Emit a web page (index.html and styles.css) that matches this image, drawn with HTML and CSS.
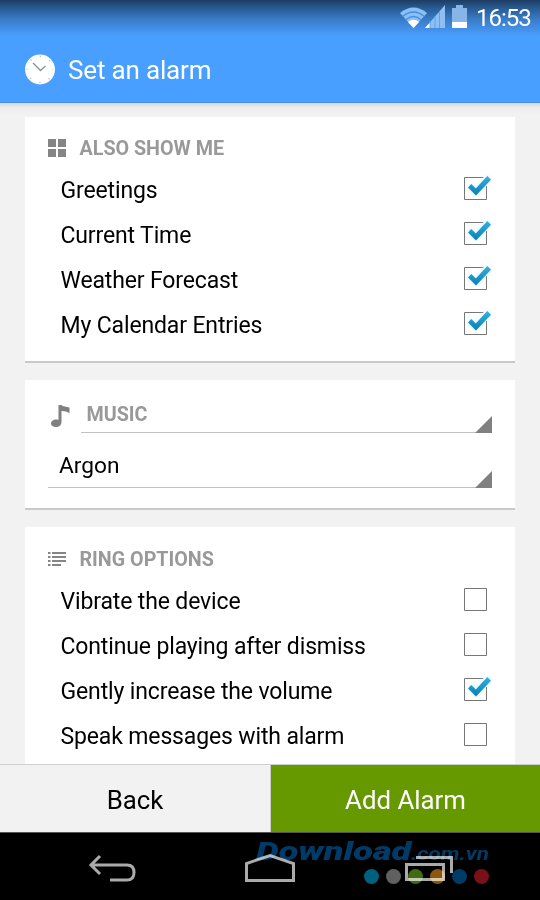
FILE: index.html
```html
<!DOCTYPE html>
<html lang="en">
<head>
<meta charset="utf-8">
<title>Set an alarm</title>
<link rel="stylesheet" href="styles.css">
</head>
<body>
<svg class="defs" width="0" height="0">
  <defs>
    <linearGradient id="tick" x1="0" y1="0" x2="0" y2="1"><stop offset="0" stop-color="#35b0de"/><stop offset="1" stop-color="#087fb5"/></linearGradient>
    <filter id="glow" x="-40%" y="-40%" width="180%" height="180%"><feGaussianBlur stdDeviation="2"/></filter>
    <symbol id="box" viewBox="0 0 32 32"><path d="M4.500 6.500h22v22h-22z" fill="#fff" stroke="#777"/></symbol>
    <symbol id="checked" viewBox="0 0 32 32">
      <path d="M4.500 6.500h22v22h-22z" fill="#fff" stroke="#777"/>
      <path d="M8 16l3-3 5 5L27 5l4 3-15 16z" fill="#a6e6fb" opacity=".75" filter="url(#glow)"/>
      <path d="M23 5h6v10h-4z" fill="#f2fbfe"/>
      <path d="M8 16.500l3.300-3.400 4.500 4.300L27.300 5l3.700 3.800L16 24.500z" fill="url(#tick)"/>
    </symbol>
  </defs>
</svg>
<div class="phone">
  <header class="top">
    <div class="status">
      <svg class="wifi" width="28" height="22" viewBox="0 0 28 22"><path d="M0 6Q13.500-5 27 6L13.500 21z" fill="#8dbff3"/><path d="M2.500 9.500Q13.500.5 24.500 9.500M5.500 13Q13.500 6 21.500 13" fill="none" stroke="#438fdf" stroke-width="1.300"/><path d="M8 15Q13.500 10.500 19 15L13.500 21z" fill="#fff"/></svg>
      <svg class="signal" width="20" height="23" viewBox="0 0 20 23"><path d="M0 23L20 0V23z" fill="#8dbff3"/><path d="M5 16v7M10 11v12M14.500 6v17" stroke="#58a2ee"/><path d="M0 23l4.500-5v5z" fill="#fff"/></svg>
      <svg class="battery" width="15" height="23" viewBox="0 0 15 23"><path d="M0 3h4V0h7v3h4v20H0z" fill="#87b5e6"/><path d="M0 17h15v6H0z" fill="#fff"/></svg>
      <span class="time">16:53</span>
    </div>
    <div class="title">
      <svg width="30" height="31" viewBox="0 0 30 31"><circle cx="15" cy="15.500" r="15" fill="#fff"/><circle cx="15" cy="15.500" r="13" fill="none" stroke="#b9bec3" stroke-width="1.500" stroke-dasharray="1.200 9.010" stroke-dashoffset=".6"/><path d="M8 9l7.500 7.500 5-4.500" fill="none" stroke="#8b9297" stroke-width="1.300"/></svg>
      <h1>Set an alarm</h1>
    </div>
  </header>
  <main class="content">
    <section class="card show">
      <h2><svg width="18" height="18" viewBox="0 0 18 18"><path d="M0 0h8v8H0zM10 0h8v8h-8zM0 10h8v8H0zM10 10h8v8h-8z" fill="#858585"/></svg><span>ALSO SHOW ME</span></h2>
      <div class="row"><span>Greetings</span><svg><use href="#checked"/></svg></div>
      <div class="row"><span>Current Time</span><svg><use href="#checked"/></svg></div>
      <div class="row"><span>Weather Forecast</span><svg><use href="#checked"/></svg></div>
      <div class="row"><span>My Calendar Entries</span><svg><use href="#checked"/></svg></div>
    </section>
    <section class="card music">
      <div class="music-head">
        <svg width="19" height="22" viewBox="0 0 19 22"><path d="M7.500 0h3l1 1 7 1.500v6q-2-2.500-8-2.500V17c0 3-2.500 5-5.500 5S0 20.500 0 18.500C0 15.500 4 13.500 7.500 15z" fill="#808080"/></svg>
        <div class="spinner"><span>MUSIC</span><i></i></div>
      </div>
      <div class="spinner value"><span>Argon</span><i></i></div>
    </section>
    <section class="card ring">
      <h2><svg width="18" height="14" viewBox="0 0 18 14"><path d="M0 1h2.500M0 5h2.500M0 9h2.500M0 13h2.500M4 1h14M4 5h14M4 9h14M4 13h9" stroke="#858585" stroke-width="1.800"/></svg><span>RING OPTIONS</span></h2>
      <div class="row"><span>Vibrate the device</span><svg><use href="#box"/></svg></div>
      <div class="row"><span>Continue playing after dismiss</span><svg><use href="#box"/></svg></div>
      <div class="row"><span>Gently increase the volume</span><svg><use href="#checked"/></svg></div>
      <div class="row"><span>Speak messages with alarm</span><svg><use href="#box"/></svg></div>
    </section>
  </main>
  <footer class="actions"><div class="back">Back</div><div class="add">Add Alarm</div></footer>
  <nav class="nav">
    <svg width="540" height="67" viewBox="0 0 540 67" fill="none" stroke="#aaa" stroke-width="3"><path d="M91 32h36q7 0 7 7.500t-7 7.500h-17M100 23l-9 9 9 9" /><path d="M246.500 47.500v-17L270 22.500l23.500 8v17z"/><path d="M406.500 31.500h37v15h-37zM416 24.500h35.500V40"/></svg>
    <div class="watermark">
      <div class="brand"><b>Download</b><em>.com.vn</em></div>
      <div class="dots"><i class="cyan"></i><i class="gray"></i><i class="green"></i><i class="orange"></i><i class="blue"></i><i class="red"></i></div>
    </div>
  </nav>
</div>
</body>
</html>
```
FILE: styles.css
```css
* { box-sizing: border-box; }
body { margin: 0; font-family: Roboto, "Liberation Sans", sans-serif; color: #000; }
.defs { position: absolute; }
.phone { width: 540px; height: 900px; display: flex; flex-direction: column; overflow: hidden; background: #f2f2f2; }
.top { height: 103px; flex: none; color: #fff; background: linear-gradient(#1d3c61 0, #285b92 8px, #3a7dca 20px, #489fff 36px); border-bottom: 1px solid #438fe2; }
.status { height: 36px; padding: 5px 8px 0 0; display: flex; justify-content: flex-end; align-items: flex-start; }
.wifi { margin-top: 2px; }
.signal { margin-left: -3px; }
.battery { margin-left: 7px; }
.time { margin-left: 9px; font-size: 24px; line-height: 27px; letter-spacing: -1px; width: 56px; white-space: nowrap; }
.title { height: 66px; padding-left: 25px; display: flex; align-items: center; gap: 13px; }
h1 { margin: 2px 0 0; font-size: 26px; line-height: 30px; font-weight: 400; letter-spacing: -.17px; }
.content { height: 661px; flex: none; overflow: hidden; padding: 14px 25px 0; display: flex; flex-direction: column; gap: 17px; background: linear-gradient(#d8d8d8 0, #ededed 5px, #f2f2f2 12px); }
.card { flex: none; background: #fff; border-bottom: 2px solid #c9c9c9; }
.show { height: 246px; padding: 16px 23px 0; }
.music { height: 130px; padding: 14px 23px 0; }
.ring { height: 250px; padding: 17px 23px 0; }
h2 { margin: 0; height: 34px; padding-bottom: 4px; display: flex; align-items: center; gap: 13.5px; font-size: 19.7px; font-weight: 700; letter-spacing: 0; color: #999; }
.row { height: 45px; display: flex; align-items: center; justify-content: space-between; padding-left: 12.5px; font-size: 23px; letter-spacing: -.14px; }
.row span { line-height: 27px; padding-top: 1px; }
.row svg { width: 32px; height: 32px; margin-top: -5px; }
.music-head { display: flex; gap: 11px; padding-left: 3px; height: 39px; }
.music-head svg { margin-top: 11px; }
.spinner { flex: 1; height: 39px; border-bottom: 1px solid #c2c2c2; display: flex; justify-content: space-between; align-items: flex-end; }
.spinner span { padding: 0 0 6px 5.5px; font-size: 19.7px; font-weight: 700; letter-spacing: 0; color: #999; }
.spinner i { width: 17px; height: 17px; background: #808080; clip-path: polygon(100% 0, 100% 100%, 0 100%); margin-bottom: -1px; }
.value { height: 55px; }
.value span { padding: 0 0 8px 11px; font-size: 22.7px; font-weight: 400; letter-spacing: 0; color: #000; }
.actions { height: 69px; flex: none; display: flex; border-top: 1px solid #cfcfcf; border-bottom: 1px solid #555; font-size: 25.8px; text-align: center; line-height: 71px; }
.actions div { height: 67px; }
.back { width: 271px; background: #f2f2f2; border-right: 1px solid #ccc; }
.add { width: 269px; background: #690; color: #fff; }
.nav { height: 67px; background: #000; position: relative; }
.watermark { position: absolute; left: 256px; top: 4px; width: 236px; mix-blend-mode: screen; color: #003b68; }
.brand { height: 25px; font: italic 900 26px/28px Roboto, sans-serif; display: flex; align-items: baseline; white-space: nowrap; }
.brand b { font-weight: 900; width: 155px; transform: scaleX(1.39); transform-origin: left; }
.brand em { font-size: 18px; font-weight: 700; transform: scaleX(1.24); transform-origin: left; }
.dots { display: flex; gap: 7px; padding: 7px 0 0 108px; }
.dots i { width: 15px; height: 15px; border-radius: 50%; }
.cyan { background: #006080; }
.gray { background: #606060; }
.green { background: #426a13; }
.orange { background: #8c560b; }
.blue { background: #003b68; }
.red { background: #7b1118; }
```
